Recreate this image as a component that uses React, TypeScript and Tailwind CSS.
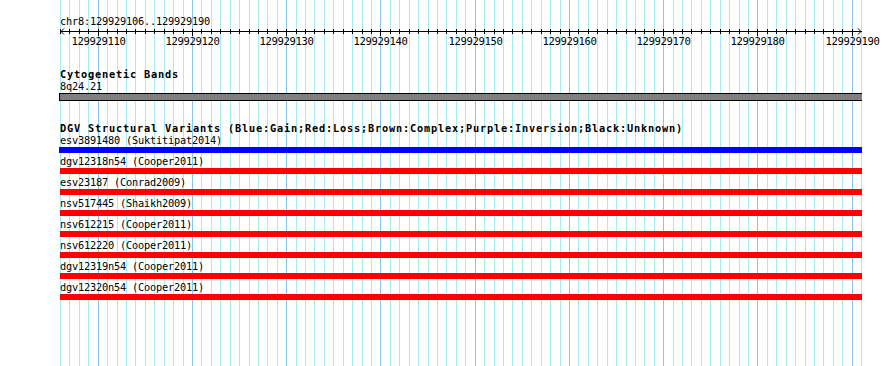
import React from "react";

const START = 129929106;
const BASES = 85;
const LEFT = 60;
const STEP = 9.425;

const xAt = (i: number) => Math.round(LEFT + i * STEP) + 0.5;

interface Variant {
    id: string;
    study: string;
    kind: "gain" | "loss";
}

const variants: Variant[] = [
    { id: "esv3891480", study: "Suktitipat2014", kind: "gain" },
    { id: "dgv12318n54", study: "Cooper2011", kind: "loss" },
    { id: "esv23187", study: "Conrad2009", kind: "loss" },
    { id: "nsv517445", study: "Shaikh2009", kind: "loss" },
    { id: "nsv612215", study: "Cooper2011", kind: "loss" },
    { id: "nsv612220", study: "Cooper2011", kind: "loss" },
    { id: "dgv12319n54", study: "Cooper2011", kind: "loss" },
    { id: "dgv12320n54", study: "Cooper2011", kind: "loss" },
];

// gd-like fonts: small = 6px per char, bold = 7px per char
const small = "font-['DejaVu_Sans_Mono',monospace] text-[10.3px] tracking-[-0.2px] h-[12px] leading-[12px] whitespace-pre";
const bold = "font-['DejaVu_Sans_Mono',monospace] text-[10.3px] tracking-[0.8px] font-bold h-[12px] leading-[12px] whitespace-pre";

const Grid = () => (
    <svg
        className="absolute inset-0"
        width={890}
        height={366}
        viewBox="0 0 890 366"
    >
        {Array.from({ length: BASES + 1 }, (_, i) => (
            <line
                key={i}
                x1={xAt(i)}
                x2={xAt(i)}
                y1={0}
                y2={366}
                stroke={i % 10 === 4 ? "#86c6ee" : "#a8ecf2"}
                strokeWidth={1}
            />
        ))}
    </svg>
);

const Ruler = () => {
    const end = xAt(BASES) + 0.5;
    return (
        <svg width={890} height={20} viewBox="0 0 890 20" className="block -ml-[60px]">
            <line x1={LEFT} x2={end} y1={4.5} y2={4.5} stroke="#000" />
            <polyline points={`${LEFT + 4},1.5 ${LEFT + 1},4.5 ${LEFT + 4},7.5`} fill="none" stroke="#000" />
            <polyline points={`${end - 4},1.5 ${end - 1},4.5 ${end - 4},7.5`} fill="none" stroke="#000" />
            {Array.from({ length: BASES }, (_, i) => {
                const major = i % 10 === 4;
                return (
                    <line
                        key={i}
                        x1={xAt(i)}
                        x2={xAt(i)}
                        y1={2}
                        y2={major ? 9 : 7}
                        stroke="#000"
                    />
                );
            })}
            {Array.from({ length: 9 }, (_, k) => {
                const i = 4 + k * 10;
                return (
                    <text
                        key={k}
                        x={xAt(i)}
                        y={17.5}
                        textAnchor="middle"
                        fontFamily="DejaVu Sans Mono, monospace"
                        fontSize={10.6}
                        letterSpacing={-0.38}
                        fill="#000"
                    >
                        {START + i}
                    </text>
                );
            })}
        </svg>
    );
};

export default function App() {
    return (
        <div className="relative w-[890px] h-[366px] overflow-hidden bg-white text-black">
            <Grid />
            <div className="relative pl-[60px] pt-[15px]">
                <div className={small}>chr8:129929106..129929190</div>
                <Ruler />

                <div className={`${bold} mt-[21px]`}>Cytogenetic Bands</div>
                <div className={small}>8q24.21</div>
                <div className="mt-[1px] -ml-[1px] w-[803px] h-[8px] bg-[#808080] border-y border-l border-black" />

                <div className={`${bold} mt-[21px]`}>
                    DGV Structural Variants (Blue:Gain;Red:Loss;Brown:Complex;Purple:Inversion;Black:Unknown)
                </div>
                <div className="flex flex-col">
                    {variants.map((v) => (
                        <div key={v.id} className="flex flex-col pb-[2px]">
                            <div className={small}>
                                {v.id} ({v.study})
                            </div>
                            <div
                                className={
                                    v.kind === "gain"
                                        ? "mt-[1px] -ml-[1px] w-[803px] h-[6px] bg-[#0000ff]"
                                        : "mt-[1px] w-[802px] h-[6px] bg-[#ff0000]"
                                }
                            />
                        </div>
                    ))}
                </div>
            </div>
        </div>
    );
}
